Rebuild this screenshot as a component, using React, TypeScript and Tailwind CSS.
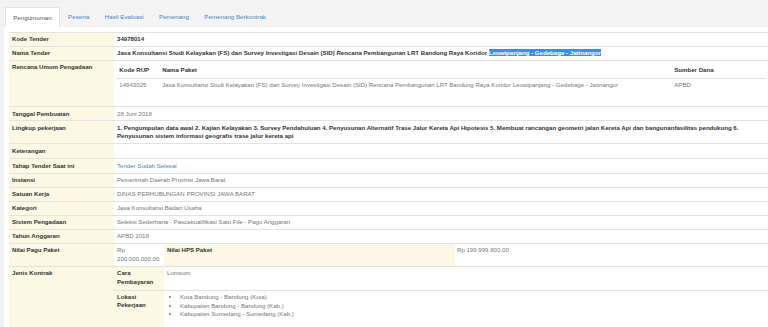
import React from "react";

const bd = "border-t border-[#e2e2e2]";
const L = `w-[105px] bg-[#fcf8e3] align-top text-left px-[3px] py-[2.3px] font-bold text-[#333] ${bd}`;
const V = `align-top text-left px-[3px] py-[2.3px] text-[#777] ${bd}`;
const VB = `align-top text-left px-[3px] py-[2.3px] font-bold text-[#333] ${bd}`;

function Row({
  label,
  children,
  cls = V,
  trCls = "",
}: {
  label: string;
  children?: React.ReactNode;
  cls?: string;
  trCls?: string;
}) {
  return (
    <tr className={trCls}>
      <th className={L}>{label}</th>
      <td className={cls}>{children}</td>
    </tr>
  );
}

export default function App() {
  const tabs = ["Peserta", "Hasil Evaluasi", "Pemenang", "Pemenang Berkontrak"];
  return (
    <div
      className="w-full min-h-[327px] bg-[#f3f3f3] text-[6.1px] leading-[8.5px] overflow-hidden"
      style={{ fontFamily: '"Liberation Sans", Arial, sans-serif' }}
    >
      <div className="flex pt-[7px] pl-[5px] h-[27px]">
        <div className="h-[20px] leading-[20px] px-[7.2px] mr-[1px] bg-white border border-b-0 border-[#e2e2e2] rounded-t-[2px] text-[#555] text-[6.2px]">
          Pengumuman
        </div>
        {tabs.map((t) => (
          <div key={t} className="h-[20px] leading-[20px] px-[7.2px] mr-[1px] text-[#4a86c0] text-[6.2px]">
            {t}
          </div>
        ))}
      </div>
      <div className="ml-[4px] bg-white pt-[5px] pl-[5px] min-h-[300px]">
        <table className="w-full border-collapse">
          <tbody>
            <Row label="Kode Tender" cls={VB}>34978014</Row>
            <Row label="Nama Tender" cls={VB}>
              Jasa Konsultansi Studi Kelayakan (FS) dan Survey Investigasi Desain (SID) Rencana Pembangunan LRT Bandung Raya Koridor{" "}
              <span className="bg-[#3390f0] text-white">Leuwipanjang - Gedebage - Jatinangor</span>
            </Row>
            <tr>
              <th className={L}>Rencana Umum Pengadaan</th>
              <td className={`align-top p-[2.3px] ${bd}`}>
                <table className="w-full border-collapse mb-[12px]">
                  <thead>
                    <tr className="border-b border-[#e2e2e2]">
                      <th className="w-[43px] text-left font-bold text-[#333] px-[3px] py-[3px]">Kode RUP</th>
                      <th className="w-[512px] text-left font-bold text-[#333] px-[3px] py-[3px]">Nama Paket</th>
                      <th className="text-left font-bold text-[#333] px-[3px] py-[3px]">Sumber Dana</th>
                    </tr>
                  </thead>
                  <tbody>
                    <tr>
                      <td className="text-[#777] px-[3px] py-[2.3px]">14943025</td>
                      <td className="text-[#777] px-[3px] py-[2.3px]">
                        Jasa Konsultansi Studi Kelayakan (FS) dan Survey Investigasi Desain (SID) Rencana Pembangunan LRT Bandung Raya Koridor Leuwipanjang - Gedebage - Jatinangor
                      </td>
                      <td className="text-[#777] px-[3px] py-[2.3px]">APBD</td>
                    </tr>
                  </tbody>
                </table>
              </td>
            </tr>
            <Row label="Tanggal Pembuatan">28 Juni 2018</Row>
            <Row label="Lingkup pekerjaan" cls={VB} trCls="h-[23px]">
              1. Pengumpulan data awal 2. Kajian Kelayakan 3. Survey Pendahuluan 4. Penyusunan Alternatif Trase Jalur Kereta Api Hipotesis 5. Membuat rancangan geometri jalan Kereta Api dan bangunanfasilitas pendukung 6. Penyusunan sistem informasi geografis trase jalur kereta api
            </Row>
            <Row label="Keterangan" trCls="h-[15px]"></Row>
            <Row label="Tahap Tender Saat ini">
              <span className="text-[#4a86c0]">Tender Sudah Selesai</span>
            </Row>
            <Row label="Instansi">Pemerintah Daerah Provinsi Jawa Barat</Row>
            <Row label="Satuan Kerja">DINAS PERHUBUNGAN PROVINSI JAWA BARAT</Row>
            <Row label="Kategori">Jasa Konsultansi Badan Usaha</Row>
            <Row label="Sistem Pengadaan">
              Seleksi Sederhana - Pascakualifikasi Satu File - Pagu Anggaran
            </Row>
            <Row label="Tahun Anggaran">APBD 2018</Row>
            <tr className="h-[23px]">
              <th className={L}>Nilai Pagu Paket</th>
              <td className={`align-top p-0 h-[23px] ${bd}`}>
                <table className="w-full h-full border-collapse">
                  <tbody>
                    <tr>
                      <td className="w-[50px] align-top text-left px-[3px] py-[2.3px] text-[#777]">
                        Rp 200.000.000,00
                      </td>
                      <th className="w-[291px] align-top text-left px-[3px] py-[2.3px] bg-[#fcf8e3] font-bold text-[#333]">
                        Nilai HPS Paket
                      </th>
                      <td className="align-top text-left px-[2px] py-[2.3px] text-[#777]">Rp 199.999.800,00</td>
                    </tr>
                  </tbody>
                </table>
              </td>
            </tr>
            <tr>
              <th className={L}>Jenis Kontrak</th>
              <td className={`align-top p-0 ${bd}`}>
                <table className="w-full border-collapse">
                  <tbody>
                    <tr className="h-[23px]">
                      <th className="w-[50px] align-top text-left px-[3px] py-[2.3px] bg-[#fcf8e3] font-bold text-[#333]">
                        Cara Pembayaran
                      </th>
                      <td className="align-top text-left px-[3px] py-[2.3px] text-[#777]">Lumsum</td>
                    </tr>
                    <tr className="h-[38px] border-t border-[#e2e2e2]">
                      <th className="w-[50px] align-top text-left px-[3px] pt-[2px] pb-[2.3px] bg-[#fcf8e3] font-bold text-[#333]">
                        Lokasi Pekerjaan
                      </th>
                      <td className="align-top text-left px-[3px] pt-[2.8px] pb-[2.3px] text-[#777]">
                        <ul className="list-disc pl-[13px] mb-[4.8px]">
                          <li>Kota Bandung - Bandung (Kota)</li>
                          <li>Kabupaten Bandung - Bandung (Kab.)</li>
                          <li>Kabupaten Sumedang - Sumedang (Kab.)</li>
                        </ul>
                      </td>
                    </tr>
                    <tr className="border-t border-[#e2e2e2]">
                      <th className="w-[50px] align-top text-left px-[3px] py-[2.3px] bg-[#fcf8e3] font-bold text-[#333]">
                        Kualifikasi Usaha
                      </th>
                      <td className="align-top text-left px-[3px] py-[2.3px] text-[#777]">Non Kecil</td>
                    </tr>
                  </tbody>
                </table>
              </td>
            </tr>
          </tbody>
        </table>
      </div>
    </div>
  );
}
